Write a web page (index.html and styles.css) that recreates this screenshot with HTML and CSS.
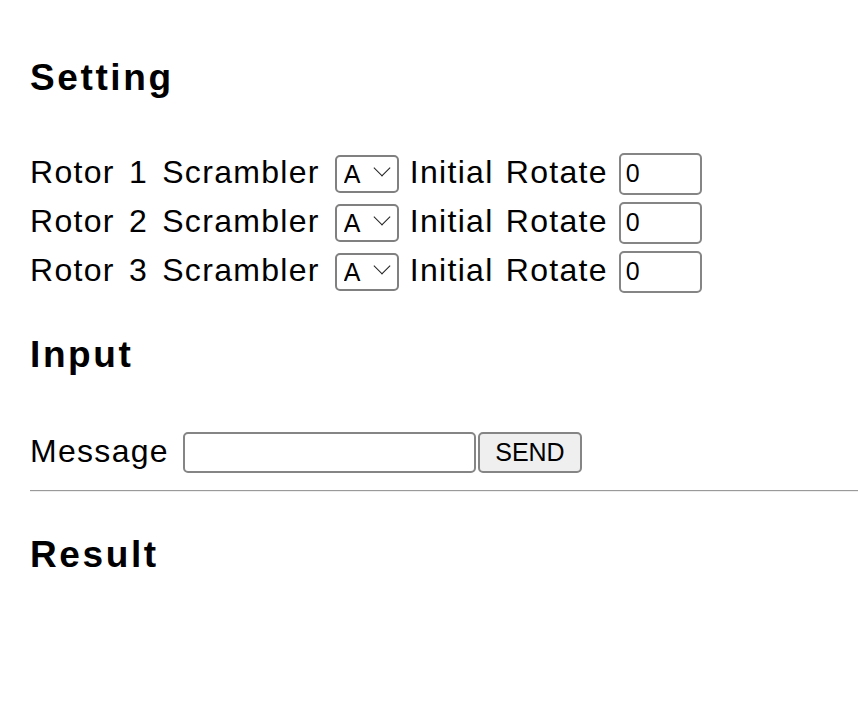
FILE: index.html
```html
<!DOCTYPE html>
<html lang="en">
<head>
<meta charset="utf-8">
<title>Enigma</title>
<link rel="stylesheet" href="styles.css">
</head>
<body>
<main class="page">
  <h2 class="heading">Setting</h2>
  <div class="rotors">
    <div class="row">
      <span class="label label-rotor">Rotor 1 Scrambler</span>
      <span class="select-wrap"><select class="select"><option>A</option><option>B</option><option>C</option></select></span>
      <span class="label">Initial Rotate</span>
      <input class="num" type="text" value="0">
    </div>
    <div class="row">
      <span class="label label-rotor">Rotor 2 Scrambler</span>
      <span class="select-wrap"><select class="select"><option>A</option><option>B</option><option>C</option></select></span>
      <span class="label">Initial Rotate</span>
      <input class="num" type="text" value="0">
    </div>
    <div class="row">
      <span class="label label-rotor">Rotor 3 Scrambler</span>
      <span class="select-wrap"><select class="select"><option>A</option><option>B</option><option>C</option></select></span>
      <span class="label">Initial Rotate</span>
      <input class="num" type="text" value="0">
    </div>
  </div>
  <h2 class="heading heading-input">Input</h2>
  <div class="row row-message">
    <span class="label label-message">Message</span>
    <input class="msg" type="text" value="">
    <button class="send" type="button">SEND</button>
  </div>
  <hr class="rule">
  <h2 class="heading heading-result">Result</h2>
</main>
</body>
</html>
```

FILE: styles.css
```css
html, body {
  margin: 0;
  padding: 0;
  background: #fff;
}

body {
  font-family: "Liberation Sans", Arial, sans-serif;
  color: #000;
}

.page {
  padding: 55px 0 0 30px;
}

.heading {
  margin: 0;
  padding-top: 2px;
  font-size: 37px;
  line-height: 42px;
  font-weight: 700;
  letter-spacing: 2.6px;
}

.rotors {
  margin-top: 50px;
}

.row {
  display: flex;
  align-items: center;
  height: 49px;
}

.label {
  font-size: 32px;
  line-height: 36px;
  letter-spacing: 1.3px;
  word-spacing: 2px;
  padding-bottom: 4px;
  margin-right: 11px;
  white-space: nowrap;
}

.label-rotor {
  word-spacing: 4px;
  margin-right: 15px;
}

.label-message {
  margin-right: 14px;
}

.select-wrap {
  position: relative;
  display: inline-block;
  margin-right: 11px;
}

.select-wrap::after {
  content: "";
  position: absolute;
  left: 41px;
  top: 7px;
  width: 11px;
  height: 11px;
  border-right: 1.5px solid #222;
  border-bottom: 1.5px solid #222;
  transform: rotate(45deg);
  pointer-events: none;
}

.select {
  -webkit-appearance: none;
  appearance: none;
  box-sizing: border-box;
  width: 64px;
  height: 38px;
  margin: 0;
  padding: 0 0 0 7px;
  border: 2px solid #808080;
  border-radius: 5px;
  background: #fff;
  font-family: "Liberation Sans", Arial, sans-serif;
  font-size: 25px;
  color: #000;
  display: block;
}

.num,
.msg {
  box-sizing: border-box;
  height: 42px;
  margin: 0;
  padding: 0 0 0 5px;
  border: 2px solid #858585;
  border-radius: 5px;
  background: #fff;
  font-family: "Liberation Sans", Arial, sans-serif;
  font-size: 25px;
  color: #000;
  outline: none;
}

.num {
  width: 83px;
}

.heading-input {
  margin-top: 36px;
}

.row-message {
  margin-top: 52px;
}

.msg {
  width: 293px;
  height: 41px;
  margin-right: 2px;
}

.send {
  box-sizing: border-box;
  width: 104px;
  height: 41px;
  margin: 0;
  padding: 0;
  border: 2px solid #858585;
  border-radius: 5px;
  background: #efefef;
  font-family: "Liberation Sans", Arial, sans-serif;
  font-size: 25px;
  color: #000;
}

.rule {
  margin: 13px 0 0;
  height: 0;
  border: 0;
  border-top: 1px solid #9a9a9a;
  border-bottom: 1px solid #eeeeee;
}

.heading-result {
  margin-top: 40px;
}
```
